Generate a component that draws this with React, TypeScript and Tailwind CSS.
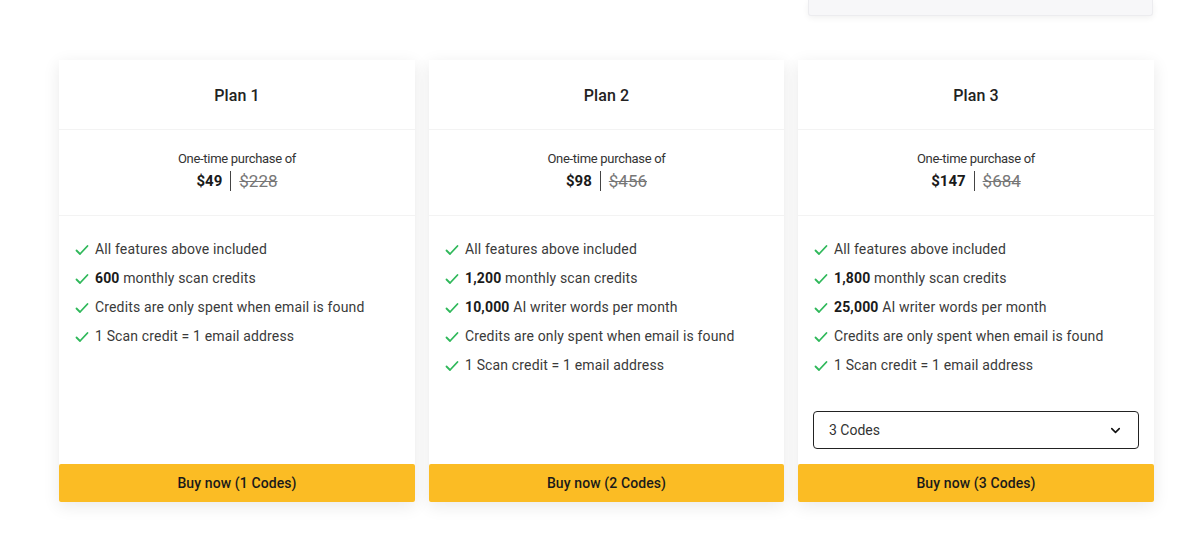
import { ChevronDown } from 'lucide-react';

type Plan = {
  name: string;
  price: string;
  oldPrice: string;
  features: { bold?: string; text: string }[];
  codes: number;
  select?: boolean;
};

const plans: Plan[] = [
  {
    name: 'Plan 1',
    price: '$49',
    oldPrice: '$228',
    codes: 1,
    features: [
      { text: 'All features above included' },
      { bold: '600', text: ' monthly scan credits' },
      { text: 'Credits are only spent when email is found' },
      { text: '1 Scan credit = 1 email address' },
    ],
  },
  {
    name: 'Plan 2',
    price: '$98',
    oldPrice: '$456',
    codes: 2,
    features: [
      { text: 'All features above included' },
      { bold: '1,200', text: ' monthly scan credits' },
      { bold: '10,000', text: ' AI writer words per month' },
      { text: 'Credits are only spent when email is found' },
      { text: '1 Scan credit = 1 email address' },
    ],
  },
  {
    name: 'Plan 3',
    price: '$147',
    oldPrice: '$684',
    codes: 3,
    select: true,
    features: [
      { text: 'All features above included' },
      { bold: '1,800', text: ' monthly scan credits' },
      { bold: '25,000', text: ' AI writer words per month' },
      { text: 'Credits are only spent when email is found' },
      { text: '1 Scan credit = 1 email address' },
    ],
  },
];

const Check = () => (
  <svg width="14" height="14" viewBox="0 0 14 14" className="shrink-0">
    <path d="M1.5 7.5 L5 11 L12.5 3" fill="none" stroke="#2fb85a" strokeWidth="1.8" strokeLinecap="round" strokeLinejoin="round" />
  </svg>
);

const PlanCard = ({ plan }: { plan: Plan }) => (
  <div className="flex flex-col bg-white shadow-[0_4px_16px_rgba(0,0,0,0.09)]">
    <div className="h-[70px] flex items-center justify-center border-b border-[#f3f3f3] pt-[2px]">
      <h3 className="text-[16px] font-medium text-[#222] tracking-[0.1px]">{plan.name}</h3>
    </div>
    <div className="h-[86px] flex flex-col items-center justify-center border-b border-[#f3f3f3] pb-[2px]">
      <p className="text-[13px] leading-[16px] text-[#333] tracking-[-0.3px]">One-time purchase of</p>
      <div className="flex items-center mt-[3px] leading-[22px]">
        <span className="text-[15px] font-bold text-[#1a1a1a]">{plan.price}</span>
        <span className="w-px h-[20px] bg-[#444] mx-[8px]" />
        <span className="text-[17px] text-[#777] line-through">{plan.oldPrice}</span>
      </div>
    </div>
    <ul className="flex-1 flex flex-col pt-[19px] px-[16px]">
      {plan.features.map((f, i) => (
        <li key={i} className="flex items-center gap-[6px] h-[29px] text-[14px] text-[#3a3a3a] tracking-[0.15px]">
          <Check />
          <span>
            {f.bold && <b className="font-bold text-[#1a1a1a]">{f.bold}</b>}
            {f.text}
          </span>
        </li>
      ))}
    </ul>
    {plan.select && (
      <div className="px-[15px] pb-[15px] pt-[31px]">
        <div className="h-[38px] border border-[#222] rounded-[4px] flex items-center justify-between pl-[15px] pr-[15px] text-[14px] text-[#333]">
          <span>3 Codes</span>
          <ChevronDown size={15} strokeWidth={2.5} className="text-[#111]" />
        </div>
      </div>
    )}
    <button className="h-[38px] shrink-0 bg-[#fbbc24] rounded-[2px] text-[14px] font-medium text-[#1a1a1a] tracking-[0.1px]">
      Buy now ({plan.codes} Codes)
    </button>
  </div>
);

export default function App() {
  return (
    <div className="w-[1185px] h-[548px] bg-white overflow-hidden" style={{ fontFamily: 'Roboto, "Noto Sans", sans-serif' }}>
      <div className="flex justify-end pr-[32px]">
        <div className="w-[345px] h-[16px] bg-[#f7f7f9] border-x border-b border-[#ececef] rounded-b-[3px] shadow-[0_2px_6px_rgba(0,0,0,0.06)]" />
      </div>
      <div className="grid grid-cols-[356px_355px_356px] gap-[14px] pl-[59px] mt-[44px] h-[442px]">
        {plans.map((p) => (
          <PlanCard key={p.name} plan={p} />
        ))}
      </div>
    </div>
  );
}
